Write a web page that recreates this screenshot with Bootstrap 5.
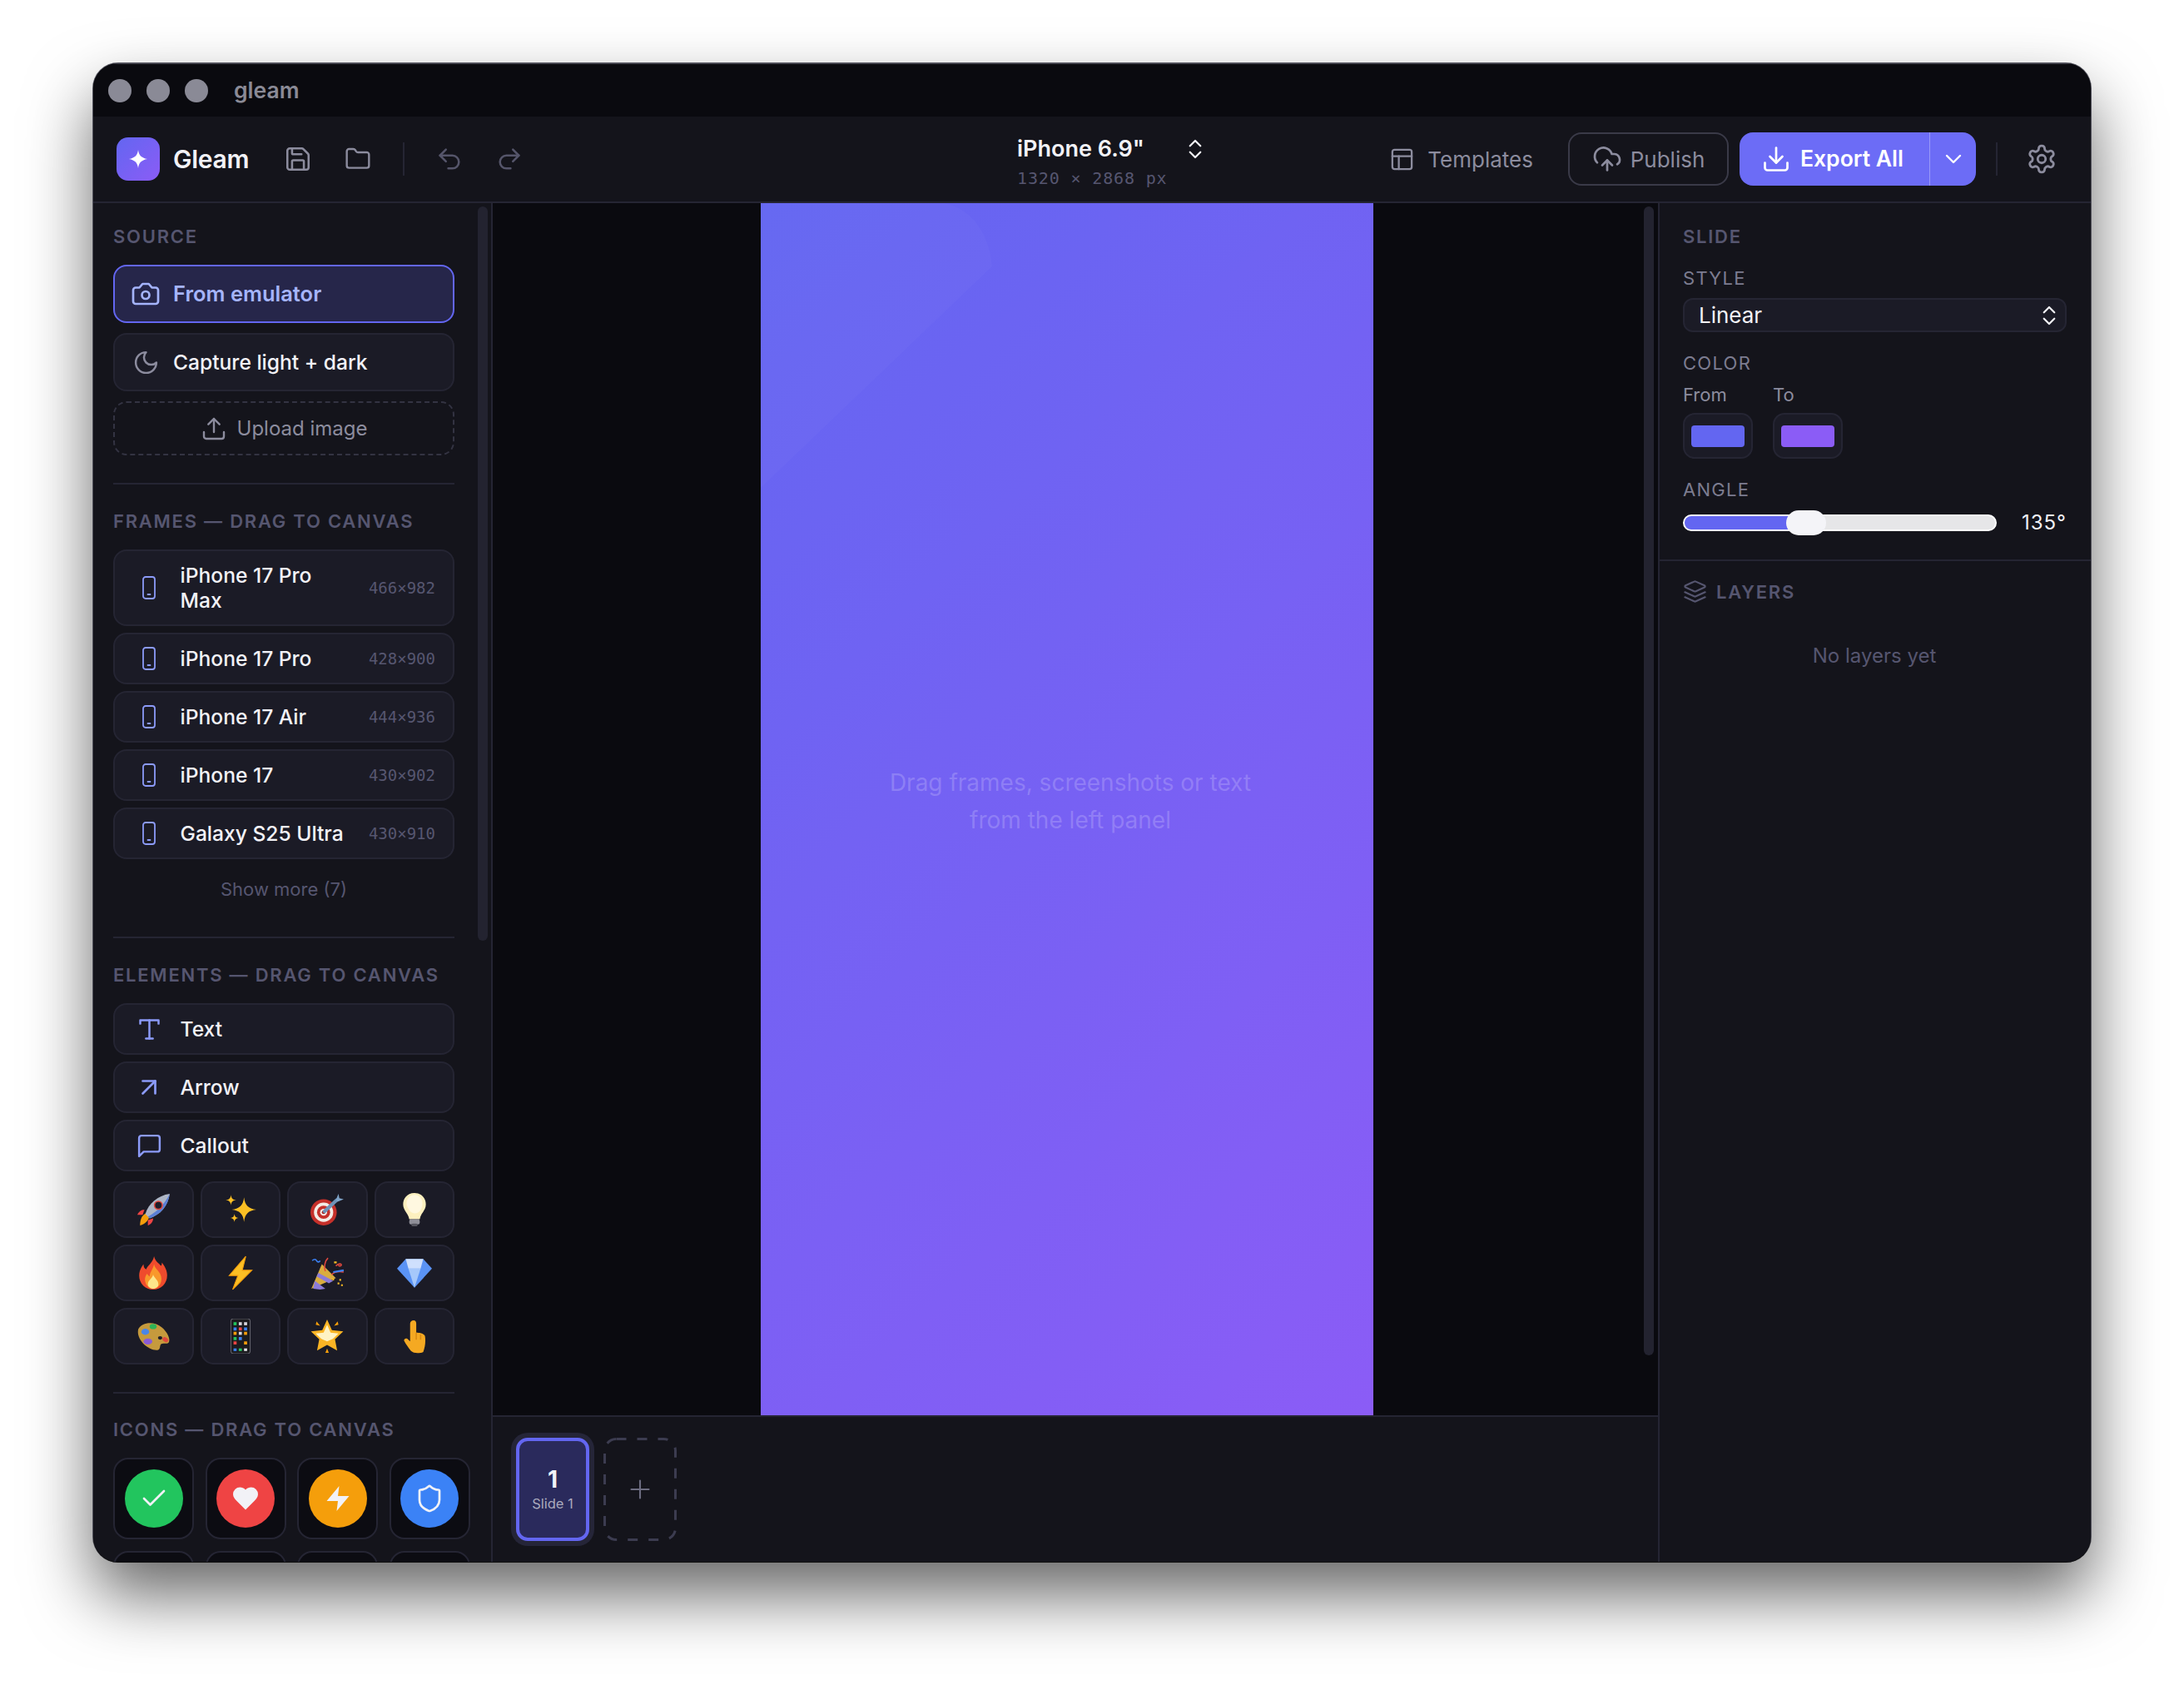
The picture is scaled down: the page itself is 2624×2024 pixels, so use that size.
<!DOCTYPE html>
<html lang="en">
<head>
  <meta charset="UTF-8">
  <title>Gleam</title>
  <link href="https://cdn.jsdelivr.net/npm/bootstrap@5.3.3/dist/css/bootstrap.min.css" rel="stylesheet">
  <style>
    :root {
      --bg-deep: #0a0a0f;
      --bg-panel: #14141b;
      --bg-raise: #1b1b26;
      --line: #252533;
      --dim: #565670;
      --soft: #8c8c9e;
      --ink: #f2f2f7;
      --accent: #6366f1;
      --accent-soft: #a5b4fc;
      --phone: #8c9bf9;
    }
    body {
      background: #fff;
      font-family: "Inter", sans-serif;
      padding: 76px 112px 0;
      color: var(--ink);
      font-size: 24.600px;
      height: 2024px;
      overflow: hidden;
    }
    svg.ic { fill: none; stroke: currentColor; stroke-width: 1.8; stroke-linecap: round; stroke-linejoin: round; flex: none; }

    .app-window {
      width: 2400px;
      height: 1800px;
      border-radius: 30px;
      overflow: hidden;
      background: var(--bg-panel);
      box-shadow: 0 1px 0 0 #111, 0 0 0 1px #55555f, 0 40px 80px rgba(0,0,0,.6);
    }
    .title-strip { height: 64px; background: var(--bg-deep); padding-left: 18px; flex: none; border-top: 1px solid #44444e; }
    .mac-dot { width: 28px; height: 28px; border-radius: 50%; background: #8a8a96; margin-right: 18px; }
    .title-text { font-size: 26.500px; font-weight: 600; color: #8a8a96; margin-left: 13px; }

    .tool-strip { height: 104px; flex: none; background: var(--bg-panel); border-bottom: 2px solid var(--line); padding-left: 28px; position: relative; }
    .logo-box { width: 52px; height: 52px; border-radius: 14px; background: linear-gradient(135deg, #6366f1, #8b5cf6); }
    .brand-text { font-size: 30px; font-weight: 600; margin-left: 16px; width: 114px; letter-spacing: -.3px; }
    .tool-btn { color: var(--soft); width: 72px; }
    .tool-btn.off { color: #55556a; }
    .tool-sep { width: 2px; height: 40px; background: var(--line); }
    .tool-sep.left-sep { margin: 0 18px; }
    .tool-sep.right-sep { margin: 0 34px 0 24px; }
    .device-box { position: absolute; left: 1110px; top: 21px; }
    .device-name { font-size: 27px; font-weight: 600; line-height: 36px; }
    .device-chev { margin-left: 46px; }
    .device-size { font-family: "DejaVu Sans Mono", monospace; font-size: 20px; letter-spacing: .85px; color: var(--dim); margin-top: 4px; line-height: 26px; }
    .tool-right { margin-left: auto; padding-right: 40px; }
    .tmpl-btn { color: var(--soft); font-size: 26px; gap: 15px; margin-right: 42px; }
    .publish-btn.btn { height: 64px; width: 193px; border: 2px solid #3a3a48; border-radius: 16px; color: var(--soft); font-size: 26px; gap: 10px; padding: 0; background: transparent; }
    .export-group { margin-left: 13px; height: 64px; }
    .export-group .btn { background: #6c6cf6; color: #fff; font-size: 26.500px; font-weight: 600; border: 0; border-radius: 16px; height: 64px; padding: 0; }
    .export-group .export-main { width: 230px; gap: 11px; padding-right: 5px; border-right: 2px solid #9a9af8; }
    .export-drop { width: 55px; }
    .gear-ico { color: var(--soft); }

    .work-area { min-height: 0; }
    .left-side { width: 480px; flex: none; position: relative; overflow: hidden; border-right: 2px solid var(--line); padding-left: 24px; }
    .side-scroll { position: absolute; left: 462px; top: 4px; width: 12px; height: 882px; border-radius: 6px; background: #232330; }
    .side-block { width: 410px; padding-top: 27px; padding-bottom: 33px; border-bottom: 2px solid var(--line); }
    .side-block + .side-block { padding-top: 31px; }
    .side-block.last-block { border: 0; padding-top: 30px; padding-bottom: 0; }
    .sec-label { font-size: 22px; line-height: 26px; font-weight: 600; letter-spacing: 1.76px; color: var(--dim); margin-bottom: 21px; white-space: nowrap; }
    .src-btn { height: 70px; border: 2px solid var(--line); border-radius: 16px; background: var(--bg-raise); padding-left: 19px; gap: 15px; font-weight: 500; margin-bottom: 12px; }
    .src-ico { width: 36px; color: var(--soft); flex: none; }
    .src-btn.picked { border-color: var(--accent); background: #26264a; color: var(--accent-soft); font-weight: 600; font-size: 25.500px; }
    .src-btn.picked .src-ico { color: var(--accent-soft); }
    .upload-btn { height: 65px; border: 2px dashed #333342; border-radius: 16px; color: var(--soft); gap: 12px; font-size: 24px; }
    .drag-item { border: 2px solid var(--line); border-radius: 16px; background: var(--bg-raise); padding: 14px 21px 14px 23px; line-height: 30px; margin-bottom: 8px; font-weight: 500; }
    .drag-item .item-ico { width: 36px; height: 30px; color: var(--phone); margin-right: 19.500px; flex: none; }
    .drag-item .item-size { font-family: "DejaVu Sans Mono", monospace; font-size: 19px; color: var(--dim); margin-left: auto; padding-left: 26px; font-weight: 400; flex: none; }
    .show-more { color: var(--dim); font-size: 22px; text-align: center; line-height: 32px; margin-top: 20px; margin-bottom: 8px; }
    .tile-row { --bs-gutter-x: 8px; --bs-gutter-y: 8px; margin-top: -4px; }
    .emoji-tile { height: 68px; border: 2px solid var(--line); border-radius: 16px; background: var(--bg-raise); }
    .icon-grid { display: grid; grid-template-columns: repeat(4, 97px); gap: 14px 13.600px; width: 430px; }
    .icon-tile { height: 98px; border: 2px solid var(--line); border-radius: 18px; background: #0c0c12; }
    .icon-disc { width: 70px; height: 70px; border-radius: 50%; color: var(--ink); }

    .center-col { min-width: 0; }
    .canvas-area { background: var(--bg-deep); position: relative; min-height: 0; }
    .slide-sheet { width: 736px; height: 100%; margin-left: 322px; background: linear-gradient(135deg, #6366f1, #8b5cf6); position: relative; }
    .slide-glow { position: absolute; left: 0; top: 0; }
    .slide-hint { position: absolute; left: 0; width: 744px; top: 674px; text-align: center; font-size: 28px; line-height: 45px; color: rgba(255,255,255,.2); }
    .canvas-scroll { position: absolute; left: 1383px; top: 4px; width: 12px; height: 1380px; border-radius: 6px; background: #232330; }
    .film-strip { height: 176px; flex: none; background: var(--bg-panel); border-top: 2px solid var(--line); padding: 25px 0 0 28px; gap: 17px; }
    .thumb-card { width: 88px; height: 124px; border: 4px solid var(--accent); border-radius: 14px; background: #2a2a5c; box-shadow: 0 0 0 6px #252538; }
    .thumb-num { font-size: 28px; font-weight: 700; line-height: 32px; }
    .thumb-name { font-size: 16.500px; color: #a9a9bd; line-height: 24px; margin-top: 1px; }
    .thumb-add { width: 88px; height: 124px; color: #6c6c80; position: relative; }
    .dash-outline { position: absolute; left: 0; top: 0; }

    .right-side { width: 520px; flex: none; border-left: 2px solid var(--line); }
    .slide-block { padding: 27px 29px 0 28px; height: 430px; border-bottom: 2px solid var(--line); }
    .slide-title { margin-bottom: 25px; }
    .field-label { font-size: 22px; line-height: 24px; font-weight: 400; letter-spacing: 1.300px; color: #7c7c90; }
    .field-label.spaced { margin-top: 25px; }
    .style-select { height: 41px; border: 2px solid var(--line); border-radius: 12px; background: var(--bg-raise); padding: 0 4px 0 17px; margin-top: 12px; font-weight: 400; font-size: 26px; }
    .swatch-pair { gap: 24px; }
    .sub-label { font-size: 22px; line-height: 24px; color: var(--soft); margin-top: 14px; }
    .swatch-box { width: 84px; height: 55px; border: 2px solid var(--line); border-radius: 14px; background: var(--bg-raise); margin-top: 10px; }
    .swatch-fill { width: 64px; height: 26px; border-radius: 4px; }
    .range-line { margin-top: 18px; }
    .range-track { width: 380px; height: 20px; border-radius: 10px; background: #e6e6e8; position: relative; border: 2px solid #fff; }
    .range-fill { position: absolute; left: 0; top: 0; bottom: 0; border-radius: 8px 0 0 8px; background: var(--accent); }
    .range-thumb { position: absolute; top: -7px; left: 122px; width: 48px; height: 30px; border-radius: 15px; background: #f4f4f8; }
    .range-val { font-size: 24px; line-height: 20px; letter-spacing: 1px; margin-left: 30px; font-weight: 400; }
    .layers-block { padding: 22px 28px; }
    .layers-head { gap: 11px; }
    .layers-ico { color: var(--dim); }
    .layers-empty { color: var(--dim); font-size: 24px; text-align: center; margin-top: 45px; padding-right: 2px; }
  </style>
</head>
<body>

<div class="app-window d-flex flex-column">

  <div class="title-strip d-flex align-items-center">
    <span class="mac-dot"></span><span class="mac-dot"></span><span class="mac-dot"></span>
    <span class="title-text">gleam</span>
  </div>

  <div class="tool-strip d-flex align-items-center">
    <div class="logo-box d-flex align-items-center justify-content-center">
      <svg width="22" height="22" viewBox="0 0 24 24" fill="#fff"><path d="M12 0c1 7 4 10.500 12 12-8 1.500-11 5-12 12-1-7-4-10.500-12-12 8-1.500 11-5 12-12z"/></svg>
    </div>
    <span class="brand-text">Gleam</span>
    <div class="tool-btn d-flex justify-content-center"><svg class="ic" width="34" height="34" viewBox="0 0 24 24"><path d="M15.200 3a2 2 0 0 1 1.400.6l3.800 3.800a2 2 0 0 1 .6 1.400V19a2 2 0 0 1-2 2H5a2 2 0 0 1-2-2V5a2 2 0 0 1 2-2z"/><path d="M17 21v-7a1 1 0 0 0-1-1H8a1 1 0 0 0-1 1v7"/><path d="M7 3v4a1 1 0 0 0 1 1h7"/></svg></div>
    <div class="tool-btn d-flex justify-content-center"><svg class="ic" width="32" height="32" viewBox="0 0 24 24"><path d="M20 20a2 2 0 0 0 2-2V8a2 2 0 0 0-2-2h-7.900a2 2 0 0 1-1.690-.9L9.600 3.900A2 2 0 0 0 7.930 3H4a2 2 0 0 0-2 2v13a2 2 0 0 0 2 2Z"/></svg></div>
    <div class="tool-sep left-sep"></div>
    <div class="tool-btn off d-flex justify-content-center"><svg class="ic" width="34" height="34" viewBox="0 0 24 24"><path d="M9 14 4 9l5-5"/><path d="M4 9h10.500a5.500 5.500 0 0 1 5.500 5.500a5.500 5.500 0 0 1-5.500 5.500H11"/></svg></div>
    <div class="tool-btn off d-flex justify-content-center"><svg class="ic" width="34" height="34" viewBox="0 0 24 24"><path d="m15 14 5-5-5-5"/><path d="M20 9H9.500A5.500 5.500 0 0 0 4 14.500A5.500 5.500 0 0 0 9.500 20H13"/></svg></div>

    <div class="device-box">
      <div class="d-flex align-items-center">
        <span class="device-name">iPhone 6.9"</span>
        <svg class="ic device-chev" width="30" height="30" viewBox="0 0 24 24" stroke-width="2"><path d="m7 15 5 5 5-5"/><path d="m7 9 5-5 5 5"/></svg>
      </div>
      <div class="device-size">1320 × 2868 px</div>
    </div>

    <div class="tool-right d-flex align-items-center">
      <div class="tmpl-btn d-flex align-items-center">
        <svg class="ic" width="31" height="31" viewBox="0 0 24 24"><rect x="3" y="3" width="18" height="18" rx="2"/><path d="M3 9h18"/><path d="M9 21V9"/></svg>
        <span>Templates</span>
      </div>
      <button class="btn publish-btn d-flex align-items-center justify-content-center">
        <svg class="ic" width="36" height="36" viewBox="0 0 24 24"><path d="M12 13v8"/><path d="M4 14.899A7 7 0 1 1 15.710 8h1.790a4.500 4.500 0 0 1 2.500 8.242"/><path d="m8 17 4-4 4 4"/></svg>
        <span>Publish</span>
      </button>
      <div class="btn-group export-group">
        <button class="btn export-main d-flex align-items-center justify-content-center">
          <svg class="ic" width="36" height="36" viewBox="0 0 24 24"><path d="M21 15v4a2 2 0 0 1-2 2H5a2 2 0 0 1-2-2v-4"/><path d="m7 10 5 5 5-5"/><path d="M12 15V3"/></svg>
          <span>Export All</span>
        </button>
        <button class="btn export-drop d-flex align-items-center justify-content-center">
          <svg class="ic" width="32" height="32" viewBox="0 0 24 24"><path d="m6 9 6 6 6-6"/></svg>
        </button>
      </div>
      <div class="tool-sep right-sep"></div>
      <svg class="ic gear-ico" width="38" height="38" viewBox="0 0 24 24"><path d="M12.220 2h-.44a2 2 0 0 0-2 2v.18a2 2 0 0 1-1 1.730l-.43.25a2 2 0 0 1-2 0l-.15-.08a2 2 0 0 0-2.730.73l-.22.38a2 2 0 0 0 .73 2.730l.15.1a2 2 0 0 1 1 1.720v.51a2 2 0 0 1-1 1.740l-.15.09a2 2 0 0 0-.73 2.730l.22.38a2 2 0 0 0 2.730.73l.15-.08a2 2 0 0 1 2 0l.43.25a2 2 0 0 1 1 1.730V20a2 2 0 0 0 2 2h.44a2 2 0 0 0 2-2v-.18a2 2 0 0 1 1-1.730l.43-.25a2 2 0 0 1 2 0l.15.08a2 2 0 0 0 2.730-.73l.22-.39a2 2 0 0 0-.73-2.730l-.15-.08a2 2 0 0 1-1-1.740v-.5a2 2 0 0 1 1-1.740l.15-.09a2 2 0 0 0 .73-2.730l-.22-.38a2 2 0 0 0-2.730-.73l-.15.08a2 2 0 0 1-2 0l-.43-.25a2 2 0 0 1-1-1.730V4a2 2 0 0 0-2-2z"/><circle cx="12" cy="12" r="3"/></svg>
    </div>
  </div>

  <div class="work-area d-flex flex-grow-1">

    <!-- left panel -->
    <div class="left-side">
      <div class="side-scroll"></div>

      <div class="side-block">
        <div class="sec-label">SOURCE</div>
        <div class="src-btn picked d-flex align-items-center">
          <span class="src-ico d-flex justify-content-center"><svg class="ic" width="36" height="36" viewBox="0 0 24 24"><path d="M14.500 4h-5L7 7H4a2 2 0 0 0-2 2v9a2 2 0 0 0 2 2h16a2 2 0 0 0 2-2V9a2 2 0 0 0-2-2h-3l-2.500-3z"/><circle cx="12" cy="13" r="3"/></svg></span>
          <span>From emulator</span>
        </div>
        <div class="src-btn d-flex align-items-center">
          <span class="src-ico d-flex justify-content-center"><svg class="ic" width="33" height="33" viewBox="0 0 24 24"><path d="M12 3a6 6 0 0 0 9 9 9 9 0 1 1-9-9Z"/></svg></span>
          <span>Capture light + dark</span>
        </div>
        <div class="upload-btn d-flex align-items-center justify-content-center">
          <svg class="ic" width="32" height="32" viewBox="0 0 24 24"><path d="M21 15v4a2 2 0 0 1-2 2H5a2 2 0 0 1-2-2v-4"/><path d="m17 8-5-5-5 5"/><path d="M12 3v12"/></svg>
          <span>Upload image</span>
        </div>
      </div>

      <div class="side-block">
        <div class="sec-label">FRAMES — DRAG TO CANVAS</div>
        <div class="drag-item d-flex align-items-center"><span class="item-ico d-flex align-items-center justify-content-center"><svg class="ic" width="16" height="28" viewBox="0 0 16 28"><rect x="1" y="1" width="14" height="26" rx="3"/><path d="M6.500 22h3"/></svg></span><span>iPhone 17 Pro Max</span><span class="item-size">466×982</span></div>
        <div class="drag-item d-flex align-items-center"><span class="item-ico d-flex align-items-center justify-content-center"><svg class="ic" width="16" height="28" viewBox="0 0 16 28"><rect x="1" y="1" width="14" height="26" rx="3"/><path d="M6.500 22h3"/></svg></span><span>iPhone 17 Pro</span><span class="item-size">428×900</span></div>
        <div class="drag-item d-flex align-items-center"><span class="item-ico d-flex align-items-center justify-content-center"><svg class="ic" width="16" height="28" viewBox="0 0 16 28"><rect x="1" y="1" width="14" height="26" rx="3"/><path d="M6.500 22h3"/></svg></span><span>iPhone 17 Air</span><span class="item-size">444×936</span></div>
        <div class="drag-item d-flex align-items-center"><span class="item-ico d-flex align-items-center justify-content-center"><svg class="ic" width="16" height="28" viewBox="0 0 16 28"><rect x="1" y="1" width="14" height="26" rx="3"/><path d="M6.500 22h3"/></svg></span><span>iPhone 17</span><span class="item-size">430×902</span></div>
        <div class="drag-item d-flex align-items-center"><span class="item-ico d-flex align-items-center justify-content-center"><svg class="ic" width="16" height="28" viewBox="0 0 16 28"><rect x="1" y="1" width="14" height="26" rx="3"/><path d="M6.500 22h3"/></svg></span><span>Galaxy S25 Ultra</span><span class="item-size">430×910</span></div>
        <div class="show-more">Show more (7)</div>
      </div>

      <div class="side-block">
        <div class="sec-label">ELEMENTS — DRAG TO CANVAS</div>
        <div class="drag-item d-flex align-items-center"><span class="item-ico d-flex align-items-center justify-content-center"><svg class="ic" width="33" height="33" viewBox="0 0 24 24"><path d="M4 7V4h16v3"/><path d="M9 20h6"/><path d="M12 4v16"/></svg></span><span>Text</span></div>
        <div class="drag-item d-flex align-items-center"><span class="item-ico d-flex align-items-center justify-content-center"><svg class="ic" width="36" height="36" viewBox="0 0 24 24"><path d="M7 7h10v10"/><path d="M7 17 17 7"/></svg></span><span>Arrow</span></div>
        <div class="drag-item d-flex align-items-center"><span class="item-ico d-flex align-items-center justify-content-center"><svg class="ic" width="33" height="33" viewBox="0 0 24 24"><path d="M21 15a2 2 0 0 1-2 2H7l-4 4V5a2 2 0 0 1 2-2h14a2 2 0 0 1 2 2z"/></svg></span><span>Callout</span></div>

        <div class="row row-cols-4 tile-row">
          <div class="col"><div class="emoji-tile d-flex align-items-center justify-content-center">
            <svg width="42" height="42" viewBox="0 0 40 40"><path d="M5 38c0-8 3-13 8-14l3 3c-1 5-5 10-11 11z" fill="#f59e0b"/><path d="M2 26c1-3 4-6 8-6l-2 6z" fill="#ef4444"/><path d="M14 38c3-1 6-4 6-8l-6 2z" fill="#ef4444"/><path d="M11 25C15 13 25 4 39 2c-2 14-11 24-23 28z" fill="#aeb6c6"/><path d="M39 2c-2 14-11 24-23 28l-2-2C26 22 34 12 39 2z" fill="#5b7fd6"/><circle cx="26" cy="15" r="4.500" fill="#1e1e2a" stroke="#e0483e" stroke-width="1.500"/></svg>
          </div></div>
          <div class="col"><div class="emoji-tile d-flex align-items-center justify-content-center">
            <svg width="42" height="42" viewBox="0 0 40 40" fill="#fbbf24"><path d="M24 6c1 9 5 13 14 14-9 1-13 5-14 14-1-9-5-13-14-14 9-1 13-5 14-14z"/><path d="M9 3c.5 4 2 5.500 6 6-4 .5-5.500 2-6 6-.5-4-2-5.500-6-6 4-.5 5.500-2 6-6z"/><path d="M13 25c.4 3 1.600 4.200 4.500 4.500-2.900.4-4.100 1.600-4.500 4.500-.4-2.900-1.600-4.100-4.500-4.500 2.900-.3 4.100-1.500 4.500-4.500z"/></svg>
          </div></div>
          <div class="col"><div class="emoji-tile d-flex align-items-center justify-content-center">
            <svg width="42" height="42" viewBox="0 0 40 40"><circle cx="16" cy="23" r="15" fill="#c5302a"/><circle cx="16" cy="23" r="11" fill="#f3ece6"/><circle cx="16" cy="23" r="7.500" fill="#c5302a"/><circle cx="16" cy="23" r="4" fill="#f3ece6"/><circle cx="16" cy="23" r="2" fill="#a82520"/><path d="M17 22 31 9" stroke="#6f93b8" stroke-width="4" stroke-linecap="round"/><path d="M30 9l3-7 1 5 5 1-7 3z" fill="#7fa4c8"/></svg>
          </div></div>
          <div class="col"><div class="emoji-tile d-flex align-items-center justify-content-center">
            <svg width="42" height="42" viewBox="0 0 40 40"><path d="M20 1C11 1 7 8 7 14c0 7 6 10 7 17h12c1-7 7-10 7-17 0-6-4-13-13-13z" fill="#fdf0bf"/><path d="M20 3c-5 0-9 4-9 10 0 3 2 6 4 9 3 3 8 3 11 0 2-3 3-6 3-9 0-6-4-10-9-10z" fill="#fff8e0"/><rect x="14" y="31" width="12" height="6" rx="2" fill="#8f8f98"/><rect x="16.500" y="36" width="7" height="3" rx="1.500" fill="#55555e"/></svg>
          </div></div>

          <div class="col"><div class="emoji-tile d-flex align-items-center justify-content-center">
            <svg width="42" height="42" viewBox="0 0 40 40"><path d="M21 1c2 7 5 7 8 11 1-1 1-3 1-4 4 5 6 10 6 15 0 9-7 16-16 16S4 32 4 23c0-6 3-10 5-13 0 3 1 5 3 6 2-5 8-8 9-15z" fill="#ef4b2d"/><path d="M21 10c1 5 4 6 7 11 2 4 2 8 0 12-2 3-5 5-8 5s-6-2-8-5c-2-4-2-8 1-12 1 1 2 3 3 3 0-5 4-8 5-14z" fill="#f9982b"/><path d="M20 22c1 4 6 6 6 11 0 3-3 5-6 5s-6-2-6-5c0-5 5-6 6-11z" fill="#fde68a"/></svg>
          </div></div>
          <div class="col"><div class="emoji-tile d-flex align-items-center justify-content-center">
            <svg width="42" height="42" viewBox="0 0 40 40"><path d="M26 1 7 23h10l-6 16 22-22H22z" fill="#fbbf24" stroke="#f59e0b" stroke-width="1"/></svg>
          </div></div>
          <div class="col"><div class="emoji-tile d-flex align-items-center justify-content-center">
            <svg width="42" height="42" viewBox="0 0 40 40"><path d="M2 38 14 10l16 16z" fill="#d9ad3f"/><path d="M6 29l12 9-6 1-8-1zM10 20l17 9-5 3-14-8z" fill="#8b7bd8"/><path d="M18 18C16 12 18 6 21 3M25 22c3-3 8-4 14-3M30 12c2-2 4-3 6-2 1 2-2 3-3 1" fill="none" stroke="#e0483e" stroke-width="1.500"/><path d="M3 6c2-2 4-2 5 0s3 2 4 0" fill="none" stroke="#3b82f6" stroke-width="1.500"/><path d="M28 8h3M26 27l2 1M34 28h2M32 32h2M36 34h2" stroke="#fbbf24" stroke-width="2"/><path d="M27 19 39 17" stroke="#3b82f6" stroke-width="2"/></svg>
          </div></div>
          <div class="col"><div class="emoji-tile d-flex align-items-center justify-content-center">
            <svg width="42" height="42" viewBox="0 0 40 40"><path d="M10 4h20l10 11-20 22L0 15z" fill="#5a93f5"/><path d="M13 15h14l-7 22z" fill="#a6c8fb"/><path d="M10 4h20l-3 11H13z" fill="#cfe0fd"/></svg>
          </div></div>

          <div class="col"><div class="emoji-tile d-flex align-items-center justify-content-center">
            <svg width="42" height="42" viewBox="0 0 40 40"><path d="M3 12C8 3 22 3 30 10c6 5 10 13 8 17-2 3-6 0-9 2-2 2 0 6-4 7C15 37 0 24 3 12z" fill="#c69a3d"/><ellipse cx="11" cy="15" rx="4.500" ry="3.500" fill="#4a86e8"/><ellipse cx="20" cy="9" rx="4" ry="3" fill="#2fb457"/><ellipse cx="14" cy="26" rx="5" ry="3.500" fill="#8a5bd6"/><ellipse cx="34" cy="24" rx="3.500" ry="2.500" fill="#e0483e" transform="rotate(35 34 24)"/><ellipse cx="28" cy="22" rx="2.500" ry="2" fill="#1e1e2a"/></svg>
          </div></div>
          <div class="col"><div class="emoji-tile d-flex align-items-center justify-content-center">
            <svg width="42" height="42" viewBox="0 0 40 40"><rect x="9" y="0" width="22" height="40" rx="3" fill="#1c1c20" stroke="#62626c" stroke-width="1"/><g fill="#22c55e"><rect x="12" y="4" width="3.500" height="3.500"/><rect x="12" y="21" width="3.500" height="3.500"/></g><g fill="#d8d8de"><rect x="18" y="4" width="3.500" height="3.500"/><rect x="24" y="4" width="3.500" height="3.500"/><rect x="18" y="15" width="3.500" height="3.500"/></g><g fill="#3b82f6"><rect x="12" y="10" width="3.500" height="3.500"/><rect x="24" y="10" width="3.500" height="3.500"/><rect x="18" y="21" width="3.500" height="3.500"/><rect x="12" y="34" width="3.500" height="3"/></g><g fill="#f59e0b"><rect x="12" y="15" width="3.500" height="3.500"/><rect x="24" y="15" width="3.500" height="3.500"/><rect x="24" y="26" width="3.500" height="3.500"/></g><g fill="#ef4444"><rect x="18" y="10" width="3.500" height="3.500"/><rect x="12" y="26" width="3.500" height="3.500"/></g><rect x="18" y="34" width="3.500" height="3" fill="#22c55e"/><rect x="24" y="34" width="3.500" height="3" fill="#e4e4e8"/></svg>
          </div></div>
          <div class="col"><div class="emoji-tile d-flex align-items-center justify-content-center">
            <svg width="42" height="42" viewBox="0 0 40 40"><path d="M20 1l5.500 12 13 1.500-9.500 9 2.500 13L20 30 8.500 36.500l2.500-13-9.500-9 13-1.500z" fill="#fbb424"/><path d="M20 7l4 9 9 1-6.500 6L20 26l-6.500-3-6.500-6 9-1z" fill="#fff3c4"/><path d="M8 3l4 5-5-1zM32 3l-4 5 5-1zM20 34l-2 5h4z" fill="#f59e0b"/></svg>
          </div></div>
          <div class="col"><div class="emoji-tile d-flex align-items-center justify-content-center">
            <svg width="42" height="42" viewBox="0 0 40 40"><path d="M19 2c2 0 3 1.500 3 3.500V16c4 0 9 1 10 4 1 6 0 13-2 18-4 2-11 2-14-1-3-4-6-8-8-12 0-2 2-3 4-2l3 3V5.500C15 3.500 17 2 19 2z" fill="#f5a922"/><path d="M22 16v8M27 18v6" stroke="#d98a12" stroke-width="1.500" fill="none"/></svg>
          </div></div>
        </div>
      </div>

      <div class="side-block last-block">
        <div class="sec-label">ICONS — DRAG TO CANVAS</div>
        <div class="icon-grid">
          <div class="icon-tile d-flex align-items-center justify-content-center"><div class="icon-disc d-flex align-items-center justify-content-center" style="background:#22c55e"><svg class="ic" width="36" height="36" viewBox="0 0 24 24" stroke-width="2"><path d="M20 6 9 17l-5-5"/></svg></div></div>
          <div class="icon-tile d-flex align-items-center justify-content-center"><div class="icon-disc d-flex align-items-center justify-content-center" style="background:#ef4444"><svg width="36" height="36" viewBox="0 0 24 24" fill="currentColor"><path d="M19 14c1.490-1.460 3-3.210 3-5.500A5.500 5.500 0 0 0 16.500 3c-1.760 0-3 .5-4.500 2-1.500-1.500-2.740-2-4.500-2A5.500 5.500 0 0 0 2 8.500c0 2.300 1.500 4.050 3 5.500l7 7Z"/></svg></div></div>
          <div class="icon-tile d-flex align-items-center justify-content-center"><div class="icon-disc d-flex align-items-center justify-content-center" style="background:#f59e0b"><svg width="36" height="36" viewBox="0 0 24 24" fill="currentColor"><path d="M13 2 3 14h9l-1 8 10-12h-9l1-8z"/></svg></div></div>
          <div class="icon-tile d-flex align-items-center justify-content-center"><div class="icon-disc d-flex align-items-center justify-content-center" style="background:#3b82f6"><svg class="ic" width="36" height="36" viewBox="0 0 24 24" stroke-width="2"><path d="M20 13c0 5-3.500 7.500-7.660 8.950a1 1 0 0 1-.67-.01C7.500 20.500 4 18 4 13V6a1 1 0 0 1 1-1c2 0 4.500-1.200 6.240-2.720a1.170 1.170 0 0 1 1.520 0C14.510 3.810 17 5 19 5a1 1 0 0 1 1 1z"/></svg></div></div>
          <div class="icon-tile"></div><div class="icon-tile"></div><div class="icon-tile"></div><div class="icon-tile"></div>
        </div>
      </div>
    </div>

    <!-- canvas and slide strip -->
    <div class="center-col d-flex flex-column flex-grow-1">
      <div class="canvas-area flex-grow-1">
        <div class="slide-sheet">
          <svg class="slide-glow" width="290" height="350" viewBox="0 0 290 350"><path d="M0 0H220C262 8 276 50 278 76L0 342Z" fill="#fff" fill-opacity=".025"/></svg>
          <div class="slide-hint">Drag frames, screenshots or text<br>from the left panel</div>
        </div>
        <div class="canvas-scroll"></div>
      </div>
      <div class="film-strip d-flex">
        <div class="thumb-card d-flex flex-column align-items-center justify-content-center">
          <div class="thumb-num">1</div>
          <div class="thumb-name">Slide 1</div>
        </div>
        <div class="thumb-add d-flex align-items-center justify-content-center">
          <svg class="dash-outline" width="88" height="124" viewBox="0 0 88 124"><rect x="1.500" y="1.500" width="85" height="121" rx="14" fill="none" stroke="#3c3c50" stroke-width="3" stroke-dasharray="12 13"/></svg>
          <svg class="ic" width="28" height="28" viewBox="0 0 24 24"><path d="M12 3v18"/><path d="M3 12h18"/></svg>
        </div>
      </div>
    </div>

    <!-- right panel -->
    <div class="right-side">
      <div class="slide-block">
        <div class="sec-label slide-title">SLIDE</div>
        <div class="field-label">STYLE</div>
        <div class="style-select d-flex align-items-center justify-content-between">
          <span>Linear</span>
          <svg class="ic" width="30" height="30" viewBox="0 0 24 24" stroke-width="2"><path d="m7 15 5 5 5-5"/><path d="m7 9 5-5 5 5"/></svg>
        </div>
        <div class="field-label spaced">COLOR</div>
        <div class="d-flex swatch-pair">
          <div>
            <div class="sub-label">From</div>
            <div class="swatch-box d-flex align-items-center justify-content-center"><div class="swatch-fill" style="background:#6366f1"></div></div>
          </div>
          <div>
            <div class="sub-label">To</div>
            <div class="swatch-box d-flex align-items-center justify-content-center"><div class="swatch-fill" style="background:#8b5cf6"></div></div>
          </div>
        </div>
        <div class="field-label spaced">ANGLE</div>
        <div class="d-flex align-items-center range-line">
          <div class="range-track">
            <div class="range-fill" style="width:38%"></div>
            <div class="range-thumb"></div>
          </div>
          <span class="range-val">135°</span>
        </div>
      </div>
      <div class="layers-block">
        <div class="d-flex align-items-center layers-head">
          <svg class="ic layers-ico" width="29" height="29" viewBox="0 0 24 24"><path d="m12.830 2.180a2 2 0 0 0-1.660 0L2.600 6.080a1 1 0 0 0 0 1.830l8.580 3.910a2 2 0 0 0 1.660 0l8.580-3.900a1 1 0 0 0 0-1.830Z"/><path d="m22 17.650-9.170 4.160a2 2 0 0 1-1.660 0L2 17.650"/><path d="m22 12.650-9.170 4.160a2 2 0 0 1-1.660 0L2 12.650"/></svg>
          <span class="sec-label mb-0">LAYERS</span>
        </div>
        <div class="layers-empty">No layers yet</div>
      </div>
    </div>

  </div>
</div>

<script src="https://cdn.jsdelivr.net/npm/bootstrap@5.3.3/dist/js/bootstrap.bundle.min.js"></script>
</body>
</html>
